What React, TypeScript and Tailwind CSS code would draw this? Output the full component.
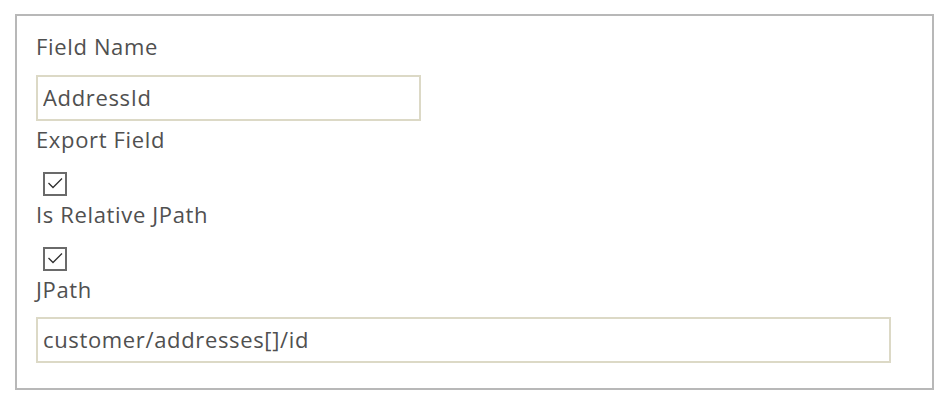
import React from "react";

function Check() {
  return (
    <div className="ml-[7px] h-[24px] w-[24px] border-2 border-[#6a6a6a] bg-white">
      <svg width="20" height="20" viewBox="0 0 20 20" className="block">
        <path d="M3.5 9 L8 13.5 L17 4.5" fill="none" stroke="#2f2f2f" strokeWidth="1.3" />
      </svg>
    </div>
  );
}

export default function App() {
  const font = { fontFamily: '"Open Sans", "Liberation Sans", sans-serif' };
  return (
    <div className="h-[406px] w-[951px] bg-white pl-[15px] pt-[14px]" style={font}>
      <div className="h-[376px] w-[919px] border-2 border-[#b8b8b8] pl-[19px] pt-[15px] text-[22px] leading-[30px] tracking-[0.65px] text-[#505050]">
        <div className="h-[30px]">Field Name</div>
        <input
          readOnly
          value="AddressId"
          className="mt-[14px] block h-[46px] w-[385px] border-2 border-[#dcd9c6] bg-white pl-[5px] pt-[4px] pb-[7px] text-[22px] leading-[30px] tracking-[0.65px] text-[#505050] outline-none"
          style={font}
        />
        <div className="mt-[3px] h-[30px]">Export Field</div>
        <div className="mt-[18px]">
          <Check />
        </div>
        <div className="mt-[3px] h-[30px]">Is Relative JPath</div>
        <div className="mt-[18px]">
          <Check />
        </div>
        <div className="mt-[3px] h-[30px]">JPath</div>
        <input
          readOnly
          value="customer/addresses[]/id"
          className="mt-[13px] block h-[46px] w-[855px] border-2 border-[#dcd9c6] bg-white pl-[5px] pt-[4px] pb-[7px] text-[22px] leading-[30px] tracking-[0.65px] text-[#505050] outline-none"
          style={font}
        />
      </div>
    </div>
  );
}
